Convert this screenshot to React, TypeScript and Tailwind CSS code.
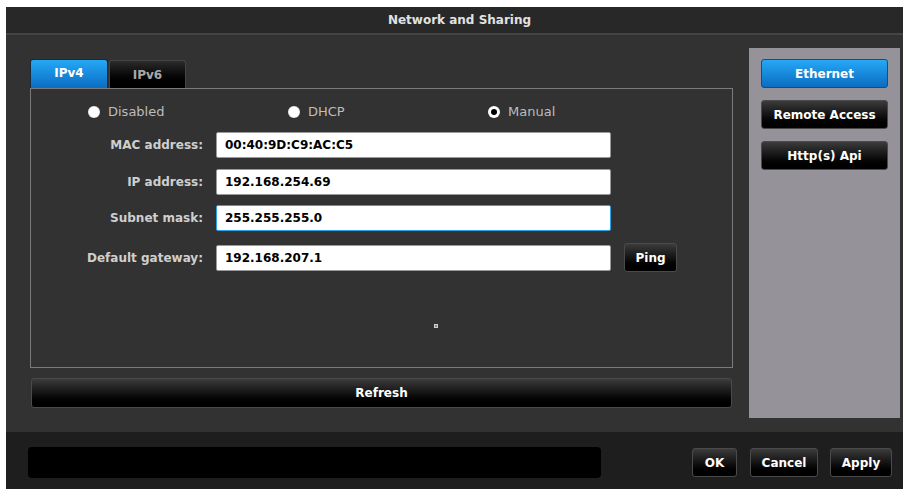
import React from "react";

const darkBtn =
  "flex items-center justify-center rounded-[3px] border border-[#4a4a4a] bg-linear-to-b from-[#3c3c3c] via-[#141414] to-[#000000] text-[12px] font-bold text-white";

const blueBtn =
  "flex items-center justify-center rounded-[3px] border border-[#0d4f86] bg-linear-to-b from-[#26a8f6] to-[#0b6dc2] text-[12px] font-bold text-white";

function Radio({ label, checked }: { label: string; checked?: boolean }) {
  return (
    <div className="flex w-[200px] items-center gap-[8px]">
      {checked ? (
        <span className="flex h-[12px] w-[12px] items-center justify-center rounded-full bg-white">
          <span className="h-[6px] w-[6px] rounded-full bg-black" />
        </span>
      ) : (
        <span className="h-[12px] w-[12px] rounded-full bg-white shadow-[inset_0_0_1px_#888]" />
      )}
      <span className="text-[13px] text-[#bdbdbd]">{label}</span>
    </div>
  );
}

function Field({
  label,
  value,
  focused,
  children,
  className,
}: {
  label: string;
  value: string;
  focused?: boolean;
  children?: React.ReactNode;
  className?: string;
}) {
  return (
    <div className={"flex items-center " + (className ?? "")}>
      <div className="w-[172px] text-right text-[12px] font-bold text-[#cfcfcf]">{label}</div>
      <div
        className={
          "ml-[13px] flex h-[26px] w-[395px] items-center rounded-[2px] border bg-white pl-[8px] text-[12px] font-bold text-black " +
          (focused ? "border-[#29a3e6]" : "border-[#9a9a9a]")
        }
      >
        {value}
      </div>
      {children}
    </div>
  );
}

export default function App() {
  return (
    <div className="h-[489px] w-[903px] bg-white pl-[6px] pt-[7px] font-['DejaVu_Sans',sans-serif]">
      <div className="flex h-[482px] w-[897px] flex-col bg-[#323232]">
        {/* title bar */}
        <div className="flex h-[28px] items-center justify-center border-b-2 border-[#444444] bg-[#282828] pl-[10px] text-[12px] font-bold text-[#e2e2e2]">
          Network and Sharing
        </div>

        {/* body */}
        <div className="flex flex-1">
          <div className="ml-[24px] flex w-[703px] flex-col pt-[24px]">
            {/* tabs */}
            <div className="flex h-[29px] items-end gap-[1px]">
              <div className={blueBtn + " h-[29px] w-[78px] rounded-b-none border-b-0 border-[#1a2a3a] pb-[2px]"}>IPv4</div>
              <div className="flex h-[28px] w-[77px] items-center justify-center rounded-t-[3px] border border-b-0 border-[#444] bg-linear-to-b from-[#2c2c2c] to-[#000] text-[12px] font-bold text-[#a8a8a8]">
                IPv6
              </div>
            </div>

            {/* settings box */}
            <div className="relative h-[280px] border border-[#7a7a7a] pt-[15px]">
              <div className="flex h-[16px] pl-[57px]">
                <Radio label="Disabled" />
                <Radio label="DHCP" />
                <Radio label="Manual" checked />
              </div>
              <Field className="mt-[12px]" label="MAC address:" value="00:40:9D:C9:AC:C5" />
              <Field className="mt-[11px]" label="IP address:" value="192.168.254.69" />
              <Field className="mt-[10px]" label="Subnet mask:" value="255.255.255.0" focused />
              <Field className="mt-[12px]" label="Default gateway:" value="192.168.207.1">
                <div className={darkBtn + " ml-[13px] h-[29px] w-[53px]"}>Ping</div>
              </Field>
              <span className="absolute left-[403px] top-[235px] h-[4px] w-[4px] border border-[#d0d0d0] bg-[#888]" />
            </div>

            <div className={darkBtn + " mx-[1px] mt-[10px] h-[30px]"}>Refresh</div>
          </div>

          {/* side menu */}
          <div className="ml-[16px] mt-[13px] flex h-[370px] w-[151px] flex-col gap-[12px] bg-[#959399] px-[12px] pt-[11px]">
            <div className={blueBtn + " h-[29px]"}>Ethernet</div>
            <div className={darkBtn + " h-[29px]"}>Remote Access</div>
            <div className={darkBtn + " h-[29px]"}>Http(s) Api</div>
          </div>
        </div>

        {/* footer */}
        <div className="flex h-[57px] items-center bg-[#1e1e1e] pl-[22px] pr-[11px] pt-[4px]">
          <div className="h-[31px] w-[573px] rounded-[4px] bg-black" />
          <div className="ml-auto flex gap-[12px]">
            <div className={darkBtn + " h-[29px] w-[45px]"}>OK</div>
            <div className={darkBtn + " ml-[1px] h-[29px] w-[68px]"}>Cancel</div>
            <div className={darkBtn + " h-[29px] w-[62px]"}>Apply</div>
          </div>
        </div>
      </div>
    </div>
  );
}
